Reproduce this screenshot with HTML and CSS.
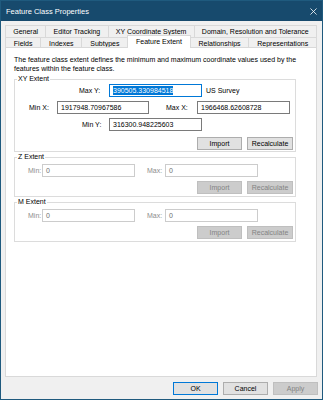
FILE: index.html
```html
<!DOCTYPE html>
<html>
<head>
	<title>Feature Class Properties</title>
	<meta charset="utf-8">
	<link rel="stylesheet" href="styles.css">
</head>
<body>
	<div class="window">
		<div class="titleBar">
			<span class="titleText">Feature Class Properties</span>
			<svg class="closeIcon" viewBox="0 0 8 8" xmlns="http://www.w3.org/2000/svg">
				<line x1="0.5" y1="0.5" x2="7.5" y2="7.5" stroke="white" stroke-width="0.9" />
				<line x1="7.5" y1="0.5" x2="0.5" y2="7.5" stroke="white" stroke-width="0.9" />
			</svg>
		</div>
		<div class="dialogBody">
			<div class="tabs">
				<div class="tabRow">
					<div class="tab">General</div>
					<div class="tab">Editor Tracking</div>
					<div class="tab">XY Coordinate System</div>
					<div class="tab">Domain, Resolution and Tolerance</div>
				</div>
				<div class="tabRow front">
					<div class="tab">Fields</div>
					<div class="tab">Indexes</div>
					<div class="tab">Subtypes</div>
					<div class="tab selected">Feature Extent</div>
					<div class="tab">Relationships</div>
					<div class="tab">Representations</div>
				</div>
			</div>
			<div class="panel">
				<p class="intro">The feature class extent defines the minimum and maximum coordinate values used by the features within the feature class.</p>

				<fieldset class="group xyGroup">
					<legend>XY Extent</legend>
					<div class="fieldRow">
						<span class="label maxY">Max Y:</span>
						<div class="textBox focused"><span class="selection">390505.330984518</span></div>
						<span class="units">US Survey</span>
					</div>
					<div class="fieldRow">
						<span class="label minX">Min X:</span>
						<div class="textBox narrow">1917948.70967586</div>
						<span class="label maxX">Max X:</span>
						<div class="textBox">1966468.62608728</div>
					</div>
					<div class="fieldRow">
						<span class="label minY">Min Y:</span>
						<div class="textBox">316300.948225603</div>
					</div>
					<div class="buttonRow">
						<button class="button">Import</button>
						<button class="button wide">Recalculate</button>
					</div>
				</fieldset>

				<fieldset class="group">
					<legend>Z Extent</legend>
					<div class="fieldRow">
						<span class="label min disabled">Min:</span>
						<div class="textBox disabled">0</div>
						<span class="label max disabled">Max:</span>
						<div class="textBox disabled">0</div>
					</div>
					<div class="buttonRow">
						<button class="button" disabled>Import</button>
						<button class="button wide" disabled>Recalculate</button>
					</div>
				</fieldset>

				<fieldset class="group">
					<legend>M Extent</legend>
					<div class="fieldRow">
						<span class="label min disabled">Min:</span>
						<div class="textBox disabled">0</div>
						<span class="label max disabled">Max:</span>
						<div class="textBox disabled">0</div>
					</div>
					<div class="buttonRow">
						<button class="button" disabled>Import</button>
						<button class="button wide" disabled>Recalculate</button>
					</div>
				</fieldset>
			</div>
			<div class="footer">
				<button class="button default">OK</button>
				<button class="button">Cancel</button>
				<button class="button" disabled>Apply</button>
			</div>
		</div>
	</div>
</body>
</html>
```

FILE: styles.css
```css
body {
	padding: 0;
	margin: 0;
	font-family: "Liberation Sans", Arial, sans-serif;
	font-size: 7px;
	color: #000;
}

.window {
	box-sizing: border-box;
	width: 323px;
	height: 400px;
	border: 1px solid #1f5a7e;
	background: #f0f0f0;
	display: flex;
	flex-direction: column;
}

.titleBar {
	height: 20px;
	flex: none;
	background: #174a6d;
	color: white;
	display: flex;
	align-items: center;
	justify-content: space-between;
	padding: 0 5px 0 5px;
}

.titleText {
	font-size: 7.5px;
}

.closeIcon {
	width: 7px;
	height: 7px;
}

.dialogBody {
	flex: 1;
	display: flex;
	flex-direction: column;
	padding: 4px 5px 0 4px;
}

/* tabs */

.tabRow {
	display: flex;
	height: 12px;
}

.tabRow.front {
	height: 10px;
}

.tab {
	flex: 1 1 auto;
	text-align: center;
	line-height: 11px;
	border: 1px solid #d9d9d9;
	border-bottom: none;
	border-right: none;
	background: #f0f0f0;
	white-space: nowrap;
}

.tab:last-child {
	border-right: 1px solid #d9d9d9;
}

.tab.selected {
	position: relative;
	z-index: 1;
	background: #fff;
	height: 12px;
	margin-top: -2px;
	border-right: 1px solid #d9d9d9;
}

.tab.selected + .tab {
	border-left: none;
}

/* panel */

.panel {
	flex: 1;
	background: #fff;
	border: 1px solid #d9d9d9;
	padding: 7px 0 0 8px;
}

.intro {
	margin: 0 0 2px 0;
	line-height: 9px;
	width: 290px;
}

.group {
	box-sizing: border-box;
	width: 282px;
	margin: 1px 0 0 0;
	padding: 3px 2px 2px 0;
	border: 1px solid #dcdcdc;
}

.group legend {
	padding: 0 1px;
	margin-left: 2px;
	line-height: 8px;
}

.xyGroup {
	margin-top: 0;
	padding-top: 1px;
	padding-bottom: 1px;
}

.fieldRow {
	display: flex;
	align-items: center;
	height: 13px;
}

.xyGroup .fieldRow + .fieldRow {
	margin-top: 4px;
}

.label {
	flex: none;
}

.label.disabled {
	color: #8d8d8d;
}

.maxY {
	margin-left: 64px;
	width: 30px;
}

.minX {
	margin-left: 14px;
	width: 28px;
}

.maxX {
	margin-left: 17px;
	width: 31px;
}

.minY {
	margin-left: 67px;
	width: 27px;
}

.min {
	margin-left: 13px;
	width: 14px;
}

.max {
	margin-left: 12px;
	width: 18px;
}

.textBox {
	box-sizing: border-box;
	width: 93px;
	height: 13px;
	line-height: 11px;
	border: 1px solid #7a7a7a;
	background: #fff;
	padding-left: 3px;
	white-space: nowrap;
	overflow: hidden;
}

.textBox.narrow {
	width: 92px;
}

.textBox.focused {
	border-color: #0078d7;
}

.textBox.disabled {
	border-color: #cccccc;
	color: #6d6d6d;
}

.selection {
	background: #0078d7;
	color: #fff;
	display: inline-block;
	line-height: 9px;
}

.units {
	margin-left: 4px;
}

.buttonRow {
	display: flex;
	justify-content: flex-end;
	gap: 5px;
	margin-top: 4px;
}

.xyGroup .buttonRow {
	margin-top: 6px;
}

.button {
	box-sizing: border-box;
	width: 45px;
	height: 13px;
	padding: 0;
	font-family: "Liberation Sans", Arial, sans-serif;
	font-size: 7px;
	color: #000;
	background: #e1e1e1;
	border: 1px solid #adadad;
	border-radius: 0;
}

.button.wide {
	width: 46px;
}

.button:disabled {
	background: #cccccc;
	border-color: #bfbfbf;
	color: #838383;
}

.button.default {
	border-color: #0078d7;
}

.footer {
	flex: none;
	display: flex;
	justify-content: flex-end;
	gap: 5px;
	padding: 5px 0 4px 0;
	margin-right: -1px;
}
```
